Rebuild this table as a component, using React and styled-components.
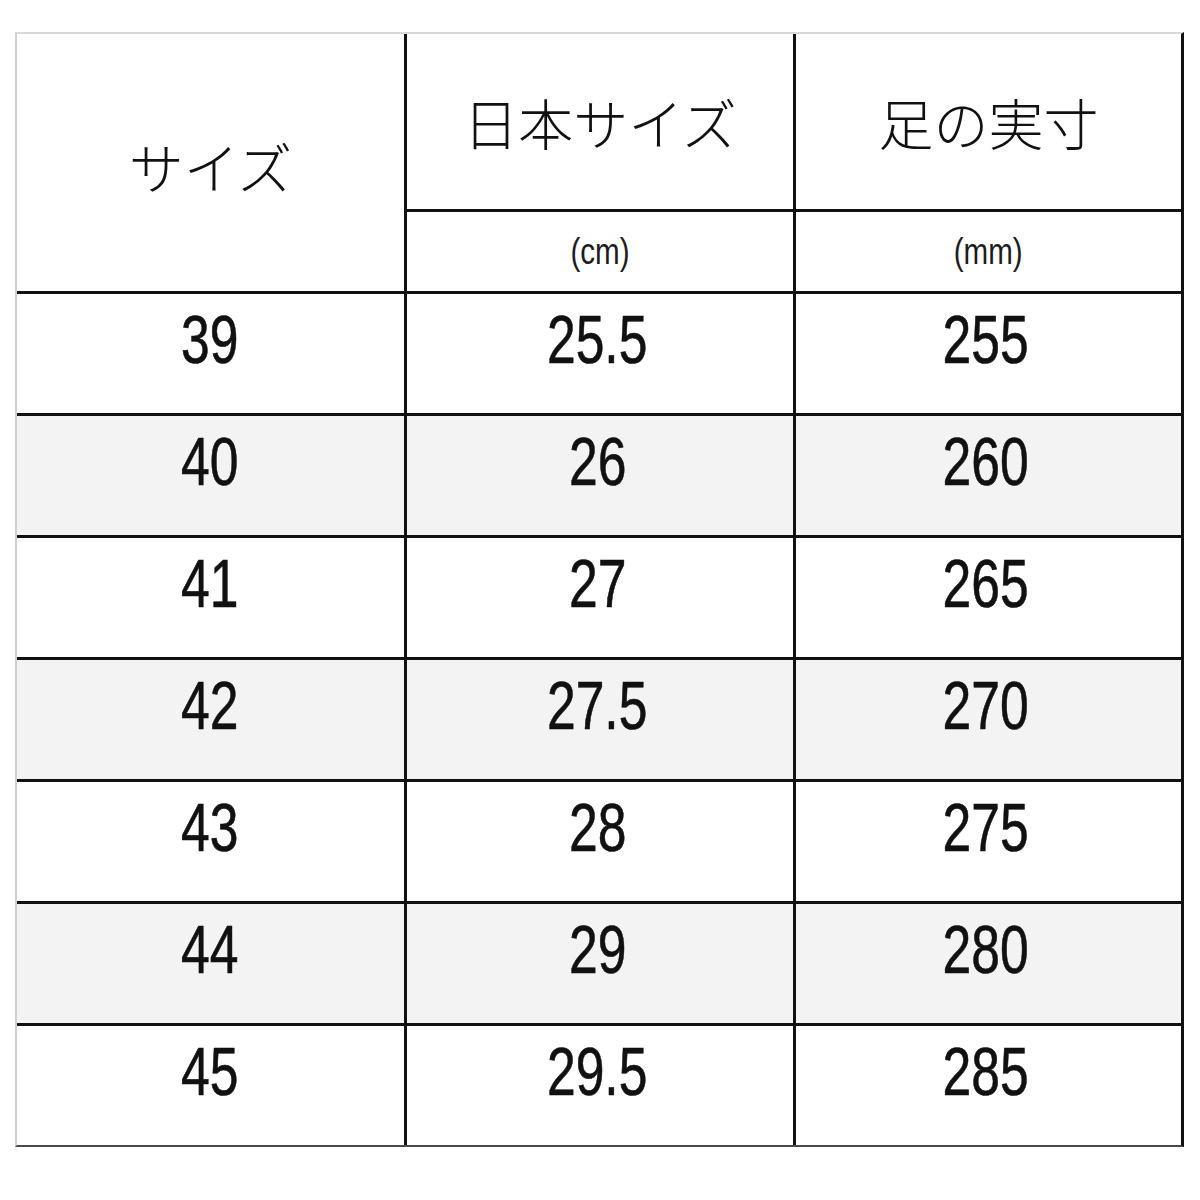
import React from "react";
import styled, { createGlobalStyle } from "styled-components";

const Global = createGlobalStyle`
  html, body { margin: 0; padding: 0; background: #ffffff; }
  body { font-family: "Liberation Sans", Arial, sans-serif; }
`;

const Page = styled.div`
  width: 1200px;
  height: 1200px;
  padding: 32px 0 0 15px;
  box-sizing: border-box;
  background: #fff;
`;

const Table = styled.div`
  display: grid;
  grid-template-columns: 387px 386px 385px;
  grid-template-rows: 175px 79px repeat(7, 119px);
  gap: 3px;
  width: max-content;
  background: #111;
  border-top: 2px solid #d9d9d9;
  border-left: 2px solid #cfcfcf;
  border-right: 3px solid #111;
  border-bottom: 2px solid #4a4a4a;
`;

const Cell = styled.div`
  display: flex;
  align-items: center;
  justify-content: center;
  background: ${(p) => (p.$shade ? "#f3f3f3" : "#ffffff")};
  ${(p) => (p.$span ? "grid-row: span 2;" : "")}
  padding-top: ${(p) => p.$pt || 0}px;
  padding-bottom: ${(p) => p.$pb || 0}px;
  padding-right: ${(p) => p.$pr || 0}px;
  box-sizing: border-box;
`;

const HeadText = styled.span`
  font-family: "Noto Sans CJK JP Light", "Noto Sans CJK JP", "Noto Sans CJK SC", sans-serif;
  font-size: 55px;
  line-height: 1;
  color: #111;
  font-weight: 300;
`;

const UnitText = styled.span`
  display: inline-block;
  font-family: "Liberation Sans", Arial, sans-serif;
  font-size: 37px;
  line-height: 1;
  color: #1c1c1c;
  transform: scaleX(0.8);
`;

const Num = styled.span`
  display: inline-block;
  font-family: "Liberation Sans", Arial, sans-serif;
  font-size: 68px;
  line-height: 1;
  color: #111;
  -webkit-text-stroke: 0.6px #111;
  transform: scaleX(0.76);
`;

const rows = [
  ["39", "25.5", "255"],
  ["40", "26", "260"],
  ["41", "27", "265"],
  ["42", "27.5", "270"],
  ["43", "28", "275"],
  ["44", "29", "280"],
  ["45", "29.5", "285"],
];

export default function App() {
  return (
    <>
      <Global />
      <Page>
        <Table>
          <Cell $span $pt={5}>
            <HeadText>サイズ</HeadText>
          </Cell>
          <Cell>
            <HeadText>日本サイズ</HeadText>
          </Cell>
          <Cell>
            <HeadText>足の実寸</HeadText>
          </Cell>
          <Cell>
            <UnitText>(cm)</UnitText>
          </Cell>
          <Cell>
            <UnitText>(mm)</UnitText>
          </Cell>
          {rows.map((r, i) =>
            r.map((v, j) => (
              <Cell key={`${i}-${j}`} $shade={i % 2 === 1} $pb={30} $pr={j === 0 ? 2 : 5}>
                <Num>{v}</Num>
              </Cell>
            ))
          )}
        </Table>
      </Page>
    </>
  );
}
